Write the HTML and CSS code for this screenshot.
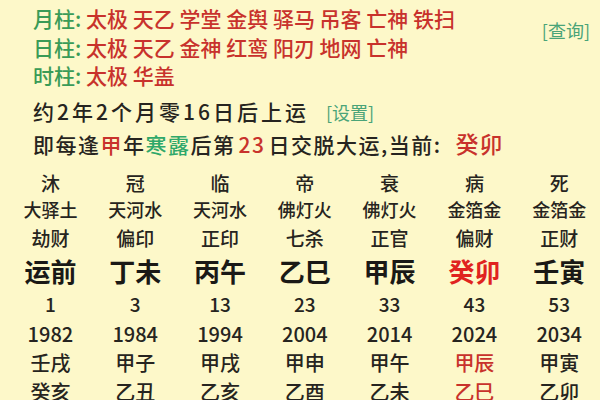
FILE: index.html
```html
<!DOCTYPE html>
<html lang="zh">
<head>
<meta charset="utf-8">
<link rel="stylesheet" href="styles.css">
</head>
<body>
<div class="page">
  <div class="shensha">
    <div class="lines">
      <div class="line"><span class="lbl">月柱:</span> <span class="red">太极 天乙 学堂 金舆 驿马 吊客 亡神 铁扫</span></div>
      <div class="line"><span class="lbl">日柱:</span> <span class="red">太极 天乙 金神 红鸾 阳刃 地网 亡神</span></div>
      <div class="line"><span class="lbl">时柱:</span> <span class="red">太极 华盖</span></div>
    </div>
    <span class="link query">[查询]</span>
  </div>
  <div class="info">
    <div class="iline start">约2年2个月零16日后上运<span class="link set">[设置]</span></div>
    <div class="iline turn">即每逢<span class="red">甲</span>年<span class="green">寒露</span>后第<span class="red num">23</span>日交脱大运,当前:<span class="red cur">癸卯</span></div>
  </div>
  <div class="table">
    <div class="row r-state"><span>沐</span><span>冠</span><span>临</span><span>帝</span><span>衰</span><span>病</span><span>死</span></div>
    <div class="row r-nayin"><span>大驿土</span><span>天河水</span><span>天河水</span><span>佛灯火</span><span>佛灯火</span><span>金箔金</span><span>金箔金</span></div>
    <div class="row r-god"><span>劫财</span><span>偏印</span><span>正印</span><span>七杀</span><span>正官</span><span>偏财</span><span>正财</span></div>
    <div class="row r-gz"><span>运前</span><span>丁未</span><span>丙午</span><span>乙巳</span><span>甲辰</span><span class="hot">癸卯</span><span>壬寅</span></div>
    <div class="row r-age"><span>1</span><span>3</span><span>13</span><span>23</span><span>33</span><span>43</span><span>53</span></div>
    <div class="row r-year"><span>1982</span><span>1984</span><span>1994</span><span>2004</span><span>2014</span><span>2024</span><span>2034</span></div>
    <div class="row r-ln"><span>壬戌</span><span>甲子</span><span>甲戌</span><span>甲申</span><span>甲午</span><span class="red">甲辰</span><span>甲寅</span></div>
    <div class="row r-ln2"><span>癸亥</span><span>乙丑</span><span>乙亥</span><span>乙酉</span><span>乙未</span><span class="red">乙巳</span><span>乙卯</span></div>
  </div>
</div>
</body>
</html>
```

FILE: styles.css
```css
html, body {
  margin: 0;
  padding: 0;
  background: #fdf8c9;
  overflow: hidden;
}
.page {
  width: 600px;
  height: 400px;
  overflow: hidden;
  font-family: "Noto Sans CJK SC", "Noto Sans", sans-serif;
  font-weight: 500;
  color: #262420;
  padding-top: 4px;
  box-sizing: border-box;
}
.shensha {
  display: flex;
  align-items: flex-start;
  padding-left: 33px;
  padding-right: 10px;
}
.lines {
  flex: 1;
}
.line {
  font-size: 21px;
  line-height: 28.5px;
  height: 28.5px;
  white-space: nowrap;
}
.lbl { color: #3a9b57; }
.red { color: #c8322c; }
.green { color: #2fa86a; }
.link {
  color: #4aa478;
  font-size: 18px;
  font-weight: 400;
  letter-spacing: 0;
}
.query {
  margin-top: 14px;
  line-height: 24px;
}
.info {
  padding-left: 33px;
  margin-top: 5px;
}
.iline {
  font-size: 21px;
  line-height: 32px;
  height: 32px;
  white-space: nowrap;
}
.start {
  letter-spacing: 3px;
}
.turn {
  letter-spacing: 1.5px;
}
.num {
  margin: 0 3px;
}
.set {
  margin-left: 17px;
}
.cur {
  font-size: 23px;
  letter-spacing: 1px;
  margin-left: 14px;
}
.table {
  padding-left: 8px;
  margin-top: 10px;
}
.row {
  display: grid;
  grid-template-columns: repeat(7, 84.8px);
  text-align: center;
  white-space: nowrap;
}
.r-state { font-size: 19px; line-height: 27px; height: 27px; }
.r-nayin { font-size: 18px; line-height: 27.5px; height: 27.5px; }
.r-god { font-size: 19px; line-height: 30.5px; height: 30.5px; }
.r-gz { font-size: 26px; font-weight: bold; line-height: 34px; height: 34px; color: #1a1916; }
.r-gz .hot { color: #e0231f; }
.r-age { font-size: 19px; line-height: 32px; height: 32px; }
.r-year { font-size: 20px; line-height: 28.5px; height: 28.5px; }
.r-ln { font-size: 20px; line-height: 29px; height: 29px; }
.r-ln2 { font-size: 20px; line-height: 30px; height: 30px; }
```
